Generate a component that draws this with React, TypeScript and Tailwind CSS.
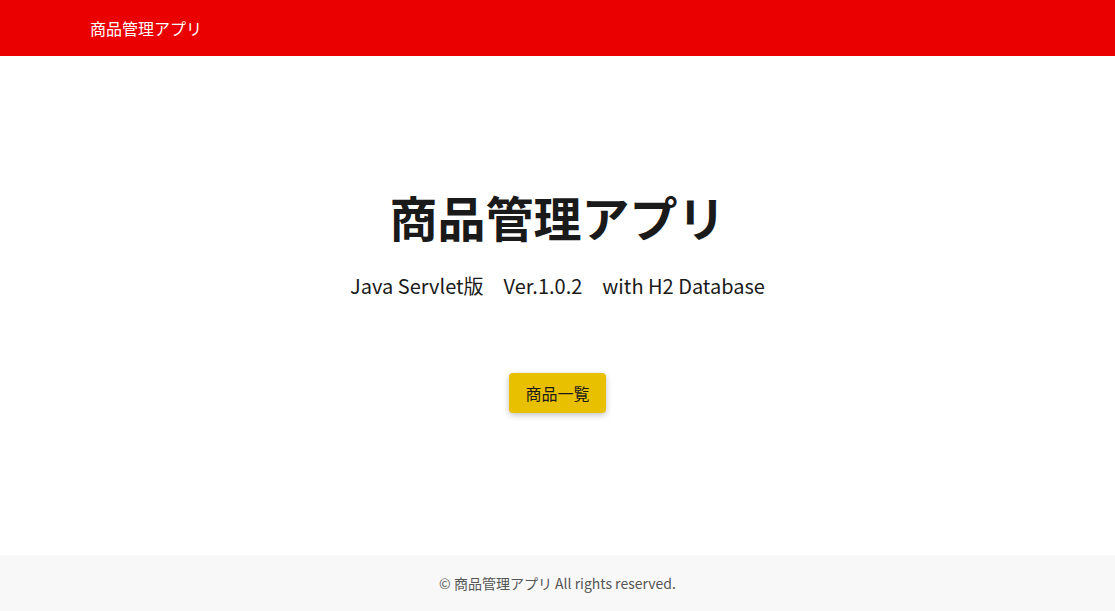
export default function App() {
  return (
    <div
      className="flex min-h-screen flex-col bg-white text-[#212529]"
      style={{ fontFamily: '"Noto Sans CJK JP", "Noto Sans", sans-serif' }}
    >
      <header className="flex h-14 items-center bg-[#eb0000] px-[90px]">
        <span className="text-base text-white">商品管理アプリ</span>
      </header>

      <main className="flex flex-1 flex-col items-center justify-center pb-[10px]">
        <h1 className="text-[48px] font-bold leading-[1.2] text-[#1a1a1a]">商品管理アプリ</h1>
        <p className="mt-[27px] text-xl text-[#1a1a1a]">Java Servlet版　Ver.1.0.2　with H2 Database</p>
        <button
          type="button"
          className="mt-[73px] rounded bg-[#e9c000] px-4 py-2 text-base text-[#1a1a1a] shadow-[0_2px_6px_rgba(0,0,0,0.25)]"
        >
          商品一覧
        </button>
      </main>

      <footer className="flex h-14 items-center justify-center bg-[#f8f8f8]">
        <p className="text-sm text-[#555]">© 商品管理アプリ All rights reserved.</p>
      </footer>
    </div>
  );
}
